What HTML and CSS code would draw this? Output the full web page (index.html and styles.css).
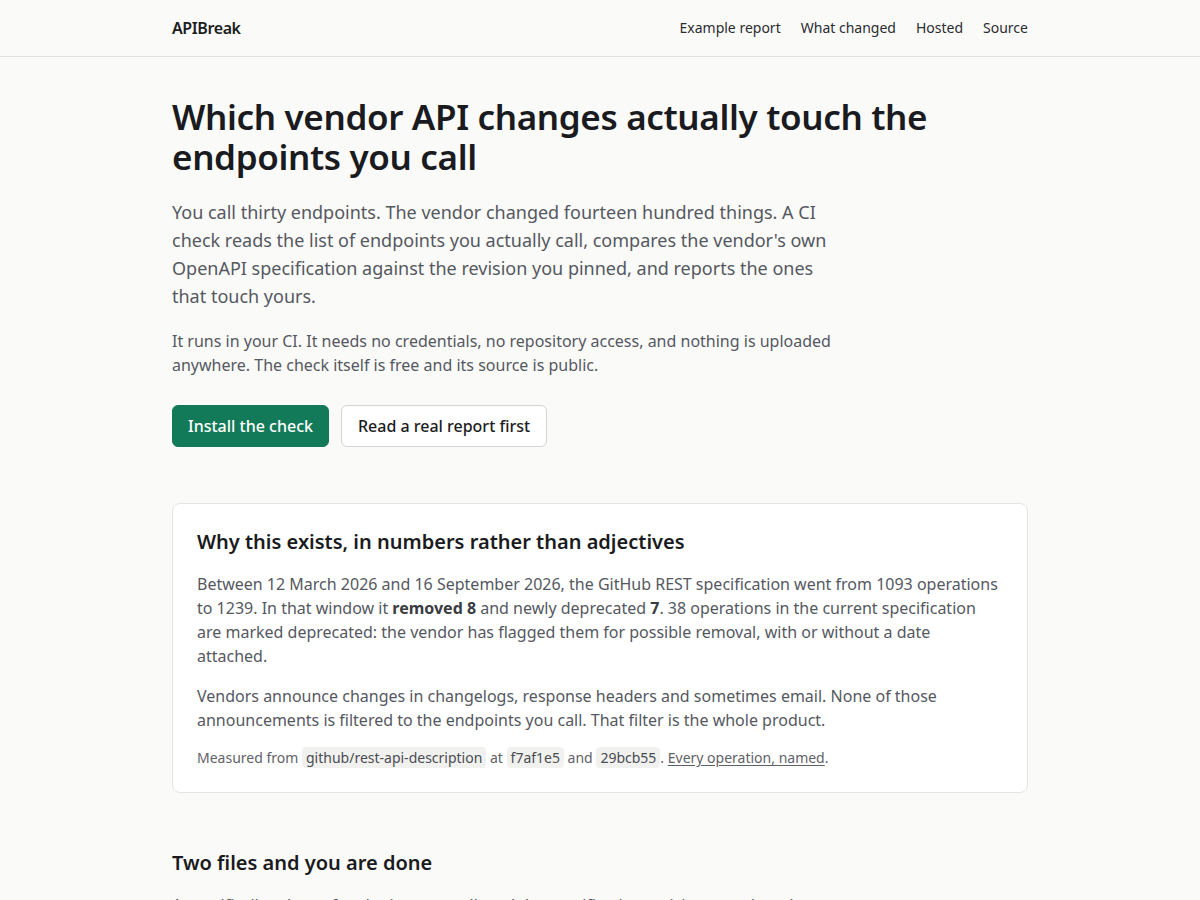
FILE: index.html
```html
<!DOCTYPE html>
<html lang="en">
<head>
<meta charset="utf-8">
<title>APIBreak</title>
<link rel="stylesheet" href="styles.css">
</head>
<body>
<header class="site-header">
  <div class="wrap header-inner">
    <a class="logo" href="#">APIBreak</a>
    <nav class="nav">
      <a href="#">Example report</a>
      <a href="#">What changed</a>
      <a href="#">Hosted</a>
      <a href="#">Source</a>
    </nav>
  </div>
</header>
<main class="wrap main">
  <section class="hero">
    <h1>Which vendor API changes actually touch the endpoints you call</h1>
    <p class="lead">You call thirty endpoints. The vendor changed fourteen hundred things. A CI check reads the list of endpoints you actually call, compares the vendor's own OpenAPI specification against the revision you pinned, and reports the ones that touch yours.</p>
    <p class="sub">It runs in your CI. It needs no credentials, no repository access, and nothing is uploaded anywhere. The check itself is free and its source is public.</p>
    <div class="actions">
      <a class="btn btn-primary" href="#">Install the check</a>
      <a class="btn btn-secondary" href="#">Read a real report first</a>
    </div>
  </section>
  <section class="card">
    <h2>Why this exists, in numbers rather than adjectives</h2>
    <p>Between 12 March 2026 and 16 September 2026, the GitHub REST specification went from 1093 operations to 1239. In that window it <strong>removed 8</strong> and newly deprecated <strong>7</strong>. 38 operations in the current specification are marked deprecated: the vendor has flagged them for possible removal, with or without a date attached.</p>
    <p>Vendors announce changes in changelogs, response headers and sometimes email. None of those announcements is filtered to the endpoints you call. That filter is the whole product.</p>
    <p class="note">Measured from <code>github/rest-api-description</code> at <code>f7af1e5</code> and <code>29bcb55</code>. <a href="#">Every operation, named</a>.</p>
  </section>
  <section class="section">
    <h2>Two files and you are done</h2>
    <p>A specific, listed set of endpoints you call, and the specification revision you pinned. That is the whole setup.</p>
  </section>
</main>
</body>
</html>
```
FILE: styles.css
```css
* { box-sizing: border-box; }
html, body { margin: 0; padding: 0; }
body {
  background: #fafaf9;
  color: #1c1d21;
  font-family: "Noto Sans", "Open Sans", "DejaVu Sans", sans-serif;
  font-size: 16px;
  line-height: 24px;
}
a { color: inherit; text-decoration: none; }
.wrap { width: 856px; margin: 0 auto; }
.site-header {
  border-bottom: 1px solid #e2e2e0;
  background: #fafaf9;
}
.header-inner {
  height: 56px;
  display: flex;
  align-items: center;
  justify-content: space-between;
}
.logo { font-size: 16px; font-weight: 600; color: #1c1d21; letter-spacing: -0.4px; }
.nav { display: flex; gap: 20px; font-size: 14px; color: #2b2c30; }
.main { padding-top: 40px; }
h1 {
  margin: 0;
  font-size: 35px;
  line-height: 40px;
  font-weight: 600;
  letter-spacing: -0.35px;
  color: #1a1b20;
  max-width: 780px;
}
.lead {
  margin: 21px 0 0;
  max-width: 660px;
  font-size: 18px;
  line-height: 28px;
  color: #55585f;
}
.sub {
  margin: 19px 0 0;
  max-width: 670px;
  font-size: 16px;
  line-height: 24px;
  color: #55585f;
}
.actions { display: flex; gap: 12px; margin-top: 28px; }
.btn {
  display: inline-flex;
  align-items: center;
  height: 42px;
  padding: 0 15px;
  border-radius: 6px;
  font-size: 16px;
  font-weight: 500;
}
.btn-primary { background: #137a59; color: #ffffff; border: 1px solid #137a59; }
.btn-secondary { background: #ffffff; color: #1c1d21; border: 1px solid #d4d4d2; padding: 0 16px; }
.card {
  margin-top: 56px;
  background: #ffffff;
  border: 1px solid #e4e4e2;
  border-radius: 8px;
  padding: 24px;
}
.card h2, .section h2 {
  margin: 0;
  font-size: 20px;
  line-height: 28px;
  font-weight: 600;
  color: #1a1b20;
}
.card p {
  margin: 16px 0 0;
  color: #55585f;
}
.card strong { color: #3a3c42; font-weight: 700; }
.card .note {
  font-size: 14px;
  line-height: 20px;
  color: #5f6168;
}
code {
  font-family: "Noto Sans", "Open Sans", sans-serif;
  font-size: 14px;
  background: #f1f1ef;
  border-radius: 4px;
  padding: 1px 4px;
  color: #4a4c52;
}
.note a { text-decoration: underline; text-underline-offset: 2px; }
.section { margin-top: 56px; padding-bottom: 40px; }
.section p { margin: 16px 0 0; color: #55585f; max-width: 660px; }
```
